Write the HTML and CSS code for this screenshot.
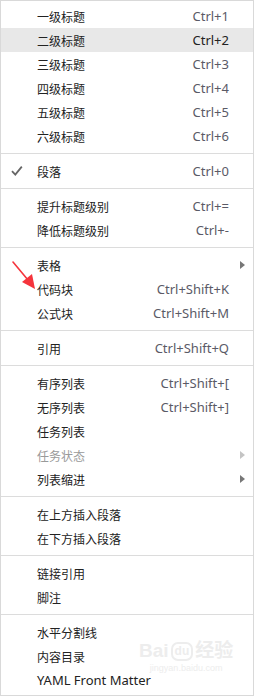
FILE: index.html
```html
<!DOCTYPE html>
<html lang="zh-CN">
  <head>
    <meta charset="UTF-8" />
    <meta name="viewport" content="width=device-width, initial-scale=1.0" />
    <title>段落菜单</title>
    <link rel="stylesheet" href="styles.css">
  </head>
  <body>
    <div class="menu">
      <div class="item"><span class="label">一级标题</span><span class="key">Ctrl+1</span></div>
      <div class="item active"><span class="label">二级标题</span><span class="key">Ctrl+2</span></div>
      <div class="item"><span class="label">三级标题</span><span class="key">Ctrl+3</span></div>
      <div class="item"><span class="label">四级标题</span><span class="key">Ctrl+4</span></div>
      <div class="item"><span class="label">五级标题</span><span class="key">Ctrl+5</span></div>
      <div class="item"><span class="label">六级标题</span><span class="key">Ctrl+6</span></div>
      <div class="sep"></div>
      <div class="item">
        <svg class="check" width="12" height="12" viewBox="0 0 12 12"><path d="M1 6.2 L4.3 9.6 L10.8 1.6" fill="none" stroke="#666" stroke-width="1.8"/></svg>
        <span class="label">段落</span><span class="key">Ctrl+0</span>
      </div>
      <div class="sep"></div>
      <div class="item"><span class="label">提升标题级别</span><span class="key">Ctrl+=</span></div>
      <div class="item"><span class="label">降低标题级别</span><span class="key">Ctrl+-</span></div>
      <div class="sep"></div>
      <div class="item"><span class="label">表格</span><span class="sub"></span></div>
      <div class="item"><span class="label">代码块</span><span class="key">Ctrl+Shift+K</span></div>
      <div class="item"><span class="label">公式块</span><span class="key">Ctrl+Shift+M</span></div>
      <div class="sep"></div>
      <div class="item"><span class="label">引用</span><span class="key">Ctrl+Shift+Q</span></div>
      <div class="sep"></div>
      <div class="item"><span class="label">有序列表</span><span class="key">Ctrl+Shift+[</span></div>
      <div class="item"><span class="label">无序列表</span><span class="key">Ctrl+Shift+]</span></div>
      <div class="item"><span class="label">任务列表</span></div>
      <div class="item disabled"><span class="label">任务状态</span><span class="sub"></span></div>
      <div class="item"><span class="label">列表缩进</span><span class="sub"></span></div>
      <div class="sep"></div>
      <div class="item"><span class="label">在上方插入段落</span></div>
      <div class="item"><span class="label">在下方插入段落</span></div>
      <div class="sep"></div>
      <div class="item"><span class="label">链接引用</span></div>
      <div class="item"><span class="label">脚注</span></div>
      <div class="sep"></div>
      <div class="item"><span class="label">水平分割线</span></div>
      <div class="item"><span class="label">内容目录</span></div>
      <div class="item"><span class="label latin">YAML Front Matter</span></div>

      <!-- red pointer arrow drawn on top of the screenshot -->
      <svg class="pointer" width="26" height="30" viewBox="0 0 26 30">
        <path d="M1 1 L16 19" stroke="#f5343c" stroke-width="1.6" stroke-linecap="round"/>
        <path d="M10 21 L20 13 L23 28 Z" fill="#f5343c"/>
      </svg>

      <div class="watermark">
        <div class="wm-logo">Bai<span class="wm-du">du</span>经验</div>
        <div class="wm-url">jingyan.baidu.com</div>
      </div>
    </div>
  </body>
</html>
```

FILE: styles.css
```css
* {
  box-sizing: border-box;
}
body {
  margin: 0;
  background-color: #fff;
  font-family: "Noto Sans CJK SC", "Noto Sans", sans-serif;
  font-size: 12px;
}
.menu {
  position: relative;
  width: 254px;
  height: 696px;
  padding: 3px 0;
  border: 1px solid #d9d9d9;
  background-color: #fff;
}
.item {
  position: relative;
  display: flex;
  align-items: center;
  height: 24px;
  padding: 0 24px 0 36px;
  color: #222;
}
.item.active {
  background-color: #e8e8e8;
}
.item.disabled {
  color: #9a9a9a;
}
.label {
  flex: 1;
  white-space: nowrap;
}
.latin,
.key {
  font-family: "Noto Sans", "Noto Sans CJK SC", sans-serif;
  font-size: 13px;
}
.key {
  color: #5a5a66;
  white-space: nowrap;
}
.item.active .key {
  color: #222;
}
.check {
  position: absolute;
  left: 10px;
  top: 6px;
}
.sub {
  position: absolute;
  right: 8px;
  top: 8px;
  width: 0;
  height: 0;
  border-top: 4px solid transparent;
  border-bottom: 4px solid transparent;
  border-left: 5px solid #777;
}
.item.disabled .sub {
  border-left-color: #c4c4c4;
}
.sep {
  height: 1px;
  margin: 5px 0;
  background-color: #dcdcdc;
}
.pointer {
  position: absolute;
  left: 11px;
  top: 260px;
}
.watermark {
  position: absolute;
  left: 138px;
  top: 638px;
  color: #ededed;
  text-align: center;
  white-space: nowrap;
  pointer-events: none;
}
.wm-logo {
  font-family: "Liberation Sans", "Noto Sans CJK SC", sans-serif;
  font-size: 19px;
  font-weight: bold;
  line-height: 24px;
}
.wm-du {
  display: inline-block;
  margin: 0 2px;
  padding: 0 2px;
  font-size: 12px;
  line-height: 15px;
  border: 2px solid #ededed;
  border-radius: 7px;
  vertical-align: 2px;
}
.wm-url {
  font-family: "Liberation Sans", sans-serif;
  font-size: 9px;
  line-height: 10px;
}
```
